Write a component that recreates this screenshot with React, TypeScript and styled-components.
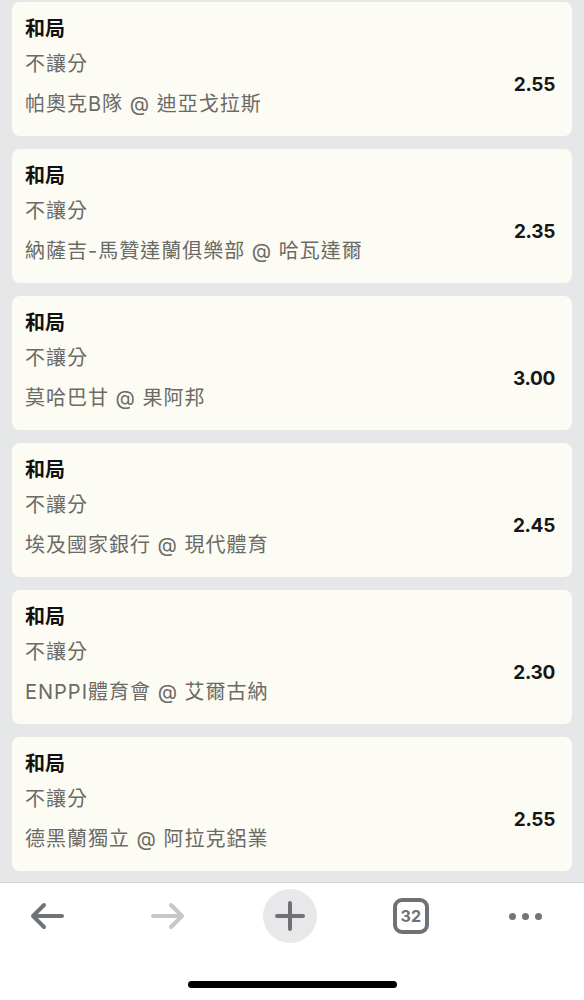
import styled, { createGlobalStyle } from "styled-components"

const GlobalStyle = createGlobalStyle`
  body {
    margin: 0;
    background: #e6e7e9;
    font-family: Inter, "Noto Sans CJK TC", sans-serif;
  }
`

const bets = [
  { match: "帕奧克B隊 @ 迪亞戈拉斯", odds: "2.55" },
  { match: "納薩吉-馬贊達蘭俱樂部 @ 哈瓦達爾", odds: "2.35" },
  { match: "莫哈巴甘 @ 果阿邦", odds: "3.00" },
  { match: "埃及國家銀行 @ 現代體育", odds: "2.45" },
  { match: "ENPPI體育會 @ 艾爾古納", odds: "2.30" },
  { match: "德黑蘭獨立 @ 阿拉克鋁業", odds: "2.55" },
]

export default function App() {
  return (
    <Screen>
      <GlobalStyle />
      <BetList>
        {bets.map((bet, i) => (
          <BetCard key={i}>
            <BetTitle>和局</BetTitle>
            <BetBody>
              <BetInfo>
                <BetLine>不讓分</BetLine>
                <BetLine>{bet.match}</BetLine>
              </BetInfo>
              <BetOdds>{bet.odds}</BetOdds>
            </BetBody>
          </BetCard>
        ))}
      </BetList>

      <BottomBar>
        <Toolbar>
          <ToolButton>
            <svg width="34" height="28" viewBox="0 0 34 28" fill="none">
              <path d="M32 14H3M14 3L3 14L14 25" stroke="#707375" strokeWidth="4" strokeLinecap="round" strokeLinejoin="round" />
            </svg>
          </ToolButton>
          <ToolButton>
            <svg width="34" height="28" viewBox="0 0 34 28" fill="none">
              <path d="M2 14H31M20 3L31 14L20 25" stroke="#c6c7c8" strokeWidth="4" strokeLinecap="round" strokeLinejoin="round" />
            </svg>
          </ToolButton>
          <PlusButton>
            <svg width="30" height="30" viewBox="0 0 30 30" fill="none">
              <path d="M15 2V28M2 15H28" stroke="#6f7274" strokeWidth="4" strokeLinecap="round" />
            </svg>
          </PlusButton>
          <ToolButton>
            <TabCount>32</TabCount>
          </ToolButton>
          <MoreButton>
            <Dot />
            <Dot />
            <Dot />
          </MoreButton>
        </Toolbar>
        <HomeArea>
          <HomeIndicator />
        </HomeArea>
      </BottomBar>
    </Screen>
  )
}

const Screen = styled.div`
  display: flex;
  flex-direction: column;
  min-height: 100vh;
`

const BetList = styled.div`
  display: flex;
  flex-direction: column;
  gap: 13px;
  padding: 2px 12px 11px;
`

const BetCard = styled.div`
  height: 134px;
  box-sizing: border-box;
  padding: 12px 17px 12px 13px;
  background: #fdfcf4;
  border-radius: 8px;
`

const BetTitle = styled.div`
  font-size: 20px;
  line-height: 30px;
  font-weight: 700;
  color: #111;
`

const BetBody = styled.div`
  display: flex;
  align-items: center;
  justify-content: space-between;
`

const BetInfo = styled.div`
  display: flex;
  flex-direction: column;
`

const BetLine = styled.div`
  font-size: 20px;
  line-height: 40px;
  letter-spacing: 1px;
  color: #6a6a66;
`

const BetOdds = styled.div`
  font-size: 19px;
  font-weight: 650;
  letter-spacing: -0.3px;
  color: #161616;
`

const BottomBar = styled.div`
  flex: 1;
  background: #fff;
  border-top: 1px solid #d6d6d6;
`

const Toolbar = styled.div`
  display: flex;
  align-items: center;
  justify-content: space-between;
  height: 66px;
  padding: 0 39px 0 20px;
`

const ToolButton = styled.div`
  width: 54px;
  height: 54px;
  display: flex;
  align-items: center;
  justify-content: center;
`

const PlusButton = styled(ToolButton)`
  border-radius: 50%;
  background: #e8e8ea;
`

const TabCount = styled.div`
  width: 36px;
  height: 36px;
  box-sizing: border-box;
  border: 4px solid #6f7274;
  border-radius: 9px;
  display: flex;
  align-items: center;
  justify-content: center;
  font-family: Inter, sans-serif;
  font-size: 16px;
  font-weight: 700;
  color: #6f7274;
`

const MoreButton = styled.div`
  width: 40px;
  display: flex;
  align-items: center;
  justify-content: center;
  gap: 6px;
`

const Dot = styled.span`
  width: 7px;
  height: 7px;
  border-radius: 50%;
  background: #737678;
`

const HomeArea = styled.div`
  display: flex;
  justify-content: center;
  padding-top: 32px;
`

const HomeIndicator = styled.div`
  width: 209px;
  height: 7px;
  border-radius: 4px;
  background: #000;
`
